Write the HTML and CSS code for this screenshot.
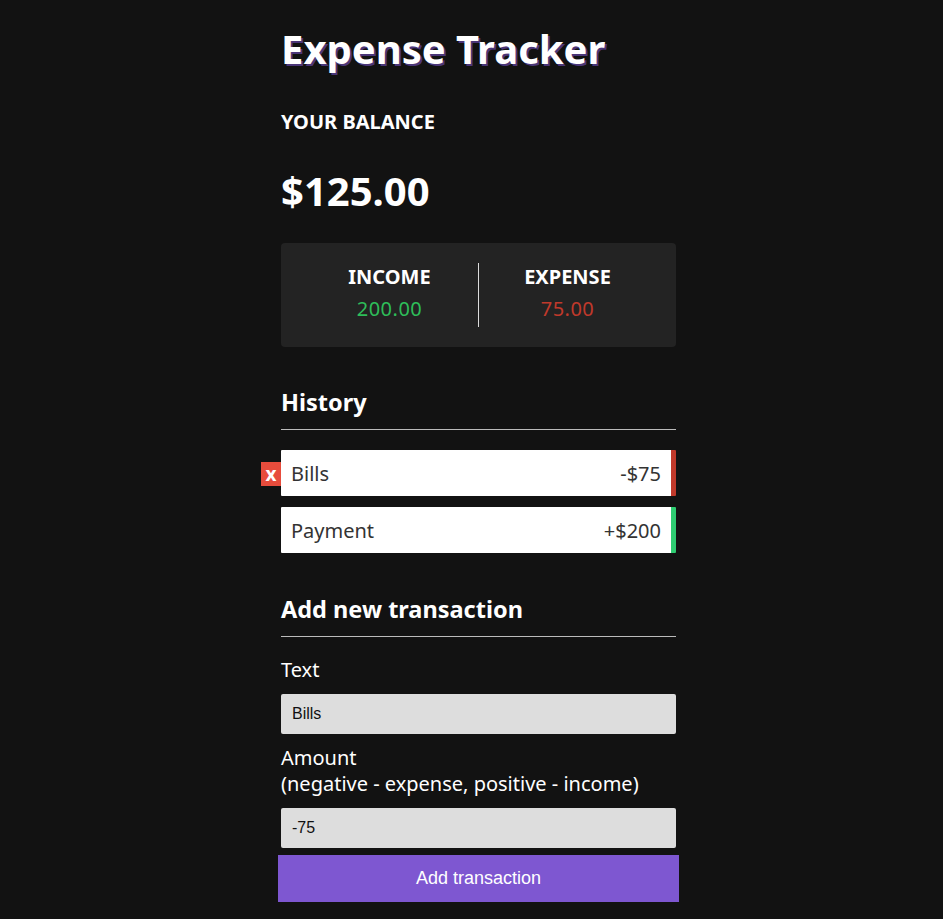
FILE: index.html
```html
<!DOCTYPE html>
<html lang="en">
<head>
<meta charset="UTF-8">
<title>Expense Tracker</title>
<link rel="stylesheet" href="styles.css">
</head>
<body>
  <div class="container">
    <h2 class="title">Expense Tracker</h2>
    <h4 class="balance-label">Your Balance</h4>
    <h1 class="balance">$125.00</h1>

    <div class="inc-exp">
      <div class="inc-exp-col inc-exp-col--first">
        <h4 class="inc-exp-label">Income</h4>
        <p class="money money--plus">200.00</p>
      </div>
      <div class="inc-exp-col">
        <h4 class="inc-exp-label">Expense</h4>
        <p class="money money--minus">75.00</p>
      </div>
    </div>

    <h3 class="section-title section-title--history">History</h3>
    <ul class="list">
      <li class="item item--minus">
        <span>Bills</span><span>-$75</span>
        <button class="delete-btn">x</button>
      </li>
      <li class="item item--plus">
        <span>Payment</span><span>+$200</span>
      </li>
    </ul>

    <h3 class="section-title section-title--add">Add new transaction</h3>
    <form class="form">
      <label class="label label--text" for="text">Text</label>
      <input class="field" type="text" id="text" value="Bills">
      <label class="label label--amount" for="amount">Amount <br>(negative - expense, positive - income)</label>
      <input class="field" type="text" id="amount" value="-75">
      <button type="button" class="btn">Add transaction</button>
    </form>
  </div>
</body>
</html>
```

FILE: styles.css
```css
* { box-sizing: border-box; }

html, body { background: #121212; }

body {
  margin: 0;
  padding: 0 0 0 14px;
  font-family: "Noto Sans", "Open Sans", sans-serif;
  color: #fff;
}

.container {
  width: 395px;
  margin: 0 auto;
  padding: 25px 0 17px;
}

.title {
  margin: 0;
  font-size: 40px;
  line-height: 48px;
  font-weight: 700;
  text-shadow: 2px 2px 0 rgba(126, 87, 210, 0.55);
}

.balance-label {
  margin: 37px 0 0;
  font-size: 20px;
  line-height: 24px;
  font-weight: 700;
  text-transform: uppercase;
}

.balance {
  margin: 33px 0 0;
  font-size: 40px;
  line-height: 48px;
  font-weight: 700;
}

.inc-exp {
  margin-top: 28px;
  background: #232323;
  border-radius: 4px;
  padding: 20px;
  display: flex;
}

.inc-exp-col {
  flex: 1;
  text-align: center;
  height: 64px;
}

.inc-exp-col--first {
  border-right: 1px solid #dcdcdc;
}

.inc-exp-label {
  margin: 0;
  font-size: 20px;
  line-height: 24px;
  padding-top: 2px;
  font-weight: 700;
  text-transform: uppercase;
}

.money {
  margin: 7px 0 0;
  font-size: 20px;
  line-height: 26px;
  letter-spacing: 0.5px;
}

.money--plus { color: #2ebd59; }
.money--minus { color: #c0392b; }

.section-title {
  margin: 40px 0 0;
  font-size: 23.5px;
  line-height: 29px;
  font-weight: 700;
  border-bottom: 1px solid #bbb;
  padding-bottom: 13px;
}

.section-title--history { padding-top: 1px; padding-bottom: 12px; }

.section-title--add {
  margin-top: 42px;
  padding-bottom: 12px;
}

.list {
  list-style: none;
  padding: 0;
  margin: 20px 0 0;
  display: flex;
  flex-direction: column;
  gap: 11px;
}

.item {
  position: relative;
  display: flex;
  justify-content: space-between;
  align-items: center;
  background: #fff;
  color: #333;
  height: 46px;
  padding: 1px 10px 0;
  font-size: 20px;
  line-height: 24px;
  border-right: 5px solid transparent;
  border-radius: 1px;
}

.item--minus { border-right-color: #c0392b; }
.item--plus { border-right-color: #2ecc71; }

.delete-btn {
  position: absolute;
  left: -20px;
  top: 12px;
  width: 20px;
  height: 24px;
  border: 0;
  padding: 0;
  background: #e74c3c;
  color: #fff;
  font-family: "Noto Sans", sans-serif;
  font-size: 19px;
  font-weight: 700;
  line-height: 22px;
}

.form {
  display: flex;
  flex-direction: column;
}

.label {
  font-size: 20px;
  line-height: 26.6px;
}

.label--text { margin-top: 20px; }
.label--amount { margin-top: 11px; }

.field {
  margin-top: 10px;
  height: 40px;
  width: 100%;
  border: 0;
  border-radius: 2px;
  background: #dddddd;
  padding: 0 11px;
  font-family: "Liberation Sans", Arial, sans-serif;
  font-size: 16px;
  color: #111;
}

.btn {
  margin: 7px -3px 0;
  width: calc(100% + 6px);
  height: 47px;
  border: 0;
  padding: 1px 0 0;
  background: #7e57d1;
  color: #fff;
  font-family: "Liberation Sans", Arial, sans-serif;
  font-size: 18px;
}
```
